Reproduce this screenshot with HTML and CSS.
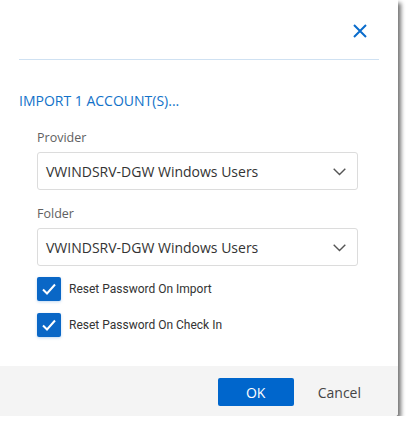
FILE: index.html
```html
<!DOCTYPE html>
<html>
<head>
<meta charset="utf-8">
<link rel="stylesheet" href="styles.css">
</head>
<body>
<div class="dialog">
  <div class="header">
    <button class="close" aria-label="Close">
      <svg width="14" height="14" viewBox="0 0 14 14"><path d="M1 1 L13 13 M13 1 L1 13" stroke="#0a6ccc" stroke-width="2" fill="none"/></svg>
    </button>
  </div>
  <div class="title">IMPORT 1 ACCOUNT(S)...</div>
  <div class="form">
    <div class="label">Provider</div>
    <div class="select">
      <span>VWINDSRV-DGW Windows Users</span>
      <svg width="13" height="8" viewBox="0 0 13 8"><path d="M0.7 0.7 L6.5 6.5 L12.3 0.7" stroke="#555" stroke-width="1.4" fill="none"/></svg>
    </div>
    <div class="label">Folder</div>
    <div class="select">
      <span>VWINDSRV-DGW Windows Users</span>
      <svg width="13" height="8" viewBox="0 0 13 8"><path d="M0.7 0.7 L6.5 6.5 L12.3 0.7" stroke="#555" stroke-width="1.4" fill="none"/></svg>
    </div>
    <div class="checks">
      <label class="check">
        <span class="box"><svg width="24" height="24" viewBox="0 0 24 24"><path d="M6 12.5 L10 16.5 L18 7.5" stroke="#fff" stroke-width="2" fill="none"/></svg></span>
        <span class="ctext">Reset Password On Import</span>
      </label>
      <label class="check">
        <span class="box"><svg width="24" height="24" viewBox="0 0 24 24"><path d="M6 12.5 L10 16.5 L18 7.5" stroke="#fff" stroke-width="2" fill="none"/></svg></span>
        <span class="ctext">Reset Password On Check In</span>
      </label>
    </div>
  </div>
  <div class="footer">
    <button class="ok">OK</button>
    <button class="cancel">Cancel</button>
  </div>
</div>
</body>
</html>
```

FILE: styles.css
```css
html, body {
  margin: 0;
  padding: 0;
  background: #ffffff;
}
.dialog {
  width: 398px;
  height: 416px;
  background: #ffffff;
  box-shadow: 3px 3px 4px rgba(0, 0, 0, 0.55);
  border-radius: 0 0 3px 0;
  display: flex;
  flex-direction: column;
  font-family: "Open Sans", sans-serif;
  overflow: hidden;
}
.header {
  height: 60px;
  margin: 0 19px;
  border-bottom: 1px solid #cfe1f2;
  display: flex;
  justify-content: flex-end;
  align-items: flex-start;
  box-sizing: border-box;
  flex: none;
}
.close {
  margin-top: 24px;
  margin-right: 12px;
  padding: 0;
  border: 0;
  background: none;
  width: 14px;
  height: 14px;
  display: flex;
}
.title {
  margin-top: 32px;
  padding-left: 19px;
  font-size: 14px;
  line-height: 18px;
  color: #1272c9;
}
.form {
  margin-left: 37px;
  width: 321px;
  display: flex;
  flex-direction: column;
}
.label {
  margin-top: 19px;
  font-size: 12.5px;
  line-height: 17px;
  color: #616161;
  margin-bottom: 6px;
}
.select + .label {
  margin-top: 15px;
}
.select {
  height: 38px;
  box-sizing: border-box;
  border: 1px solid #dcdcdc;
  border-radius: 3px;
  display: flex;
  align-items: center;
  justify-content: space-between;
  padding: 0 11px 0 8px;
  font-size: 14px;
  color: #333333;
}
.select svg {
  margin-top: 1px;
}
.checks {
  margin-top: 11px;
  display: flex;
  flex-direction: column;
  gap: 12px;
}
.check {
  display: flex;
  align-items: center;
  gap: 8px;
}
.box {
  width: 24px;
  height: 24px;
  background: #0a67c6;
  border-radius: 2px;
  box-shadow: 0 1px 3px rgba(10, 103, 198, 0.25);
  display: flex;
}
.ctext {
  font-family: Roboto, sans-serif;
  font-size: 12px;
  color: #333333;
}
.footer {
  margin-top: auto;
  height: 50px;
  background: #f4f4f4;
  display: flex;
  align-items: center;
  justify-content: flex-end;
  padding-right: 37px;
  gap: 24px;
}
.ok {
  width: 76px;
  height: 28px;
  margin-top: 2px;
  border: 0;
  border-radius: 2px;
  background: #0066cc;
  color: #ffffff;
  font-family: "Open Sans", sans-serif;
  font-size: 14px;
  padding: 0;
}
.cancel {
  border: 0;
  background: none;
  padding: 0;
  font-family: "Open Sans", sans-serif;
  font-size: 14px;
  color: #444444;
  margin-top: 2px;
}
```
